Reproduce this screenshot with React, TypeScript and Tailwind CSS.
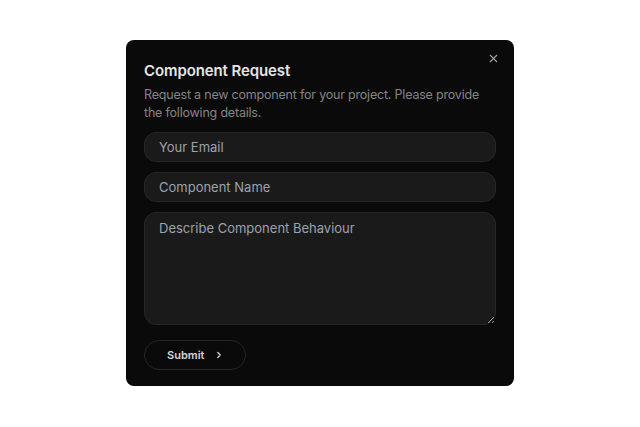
import { X, ChevronRight } from "lucide-react";

export default function App() {
  return (
    <div
      className="flex h-[427px] w-[640px] items-center justify-center bg-white"
      style={{ fontFamily: "Inter, 'Noto Sans', sans-serif" }}
    >
      <div className="relative mt-[-1px] w-[388px] rounded-lg bg-[#0a0a0a] px-[18px] pt-[22px] pb-[16px]">
        <button className="absolute right-[14px] top-[12px] text-[#a3a3a3]">
          <X size={13} strokeWidth={2} />
        </button>
        <h2 className="text-[15px] font-semibold leading-[18px] tracking-[-0.1px] text-[#e5e5e5]">
          Component Request
        </h2>
        <p className="mt-[6px] text-[12.5px] leading-[18px] tracking-[-0.2px] text-[#858585]">
          Request a new component for your project. Please provide the following details.
        </p>
        <div className="mt-[10px] flex flex-col gap-[10px]">
          <input
            placeholder="Your Email"
            className="h-[30px] w-full rounded-xl border border-[#262626] bg-[#1a1a1a] px-[14px] text-[13px] text-[#e5e5e5] outline-none placeholder:text-[#9ca3af]"
          />
          <input
            placeholder="Component Name"
            className="h-[30px] w-full rounded-xl border border-[#262626] bg-[#1a1a1a] px-[14px] text-[13px] text-[#e5e5e5] outline-none placeholder:text-[#9ca3af]"
          />
          <textarea
            placeholder="Describe Component Behaviour"
            className="block h-[113px] w-full rounded-xl border border-[#262626] bg-[#1a1a1a] px-[14px] py-[6px] text-[13px] leading-[18px] text-[#e5e5e5] outline-none placeholder:text-[#9ca3af]"
          />
        </div>
        <button className="mt-[15px] flex h-[30px] w-[102px] items-center gap-[10px] rounded-full border border-[#262626] pl-[22px] text-[11px] font-semibold text-[#d4d4d4]">
          Submit
          <ChevronRight size={10} strokeWidth={3} />
        </button>
      </div>
    </div>
  );
}
